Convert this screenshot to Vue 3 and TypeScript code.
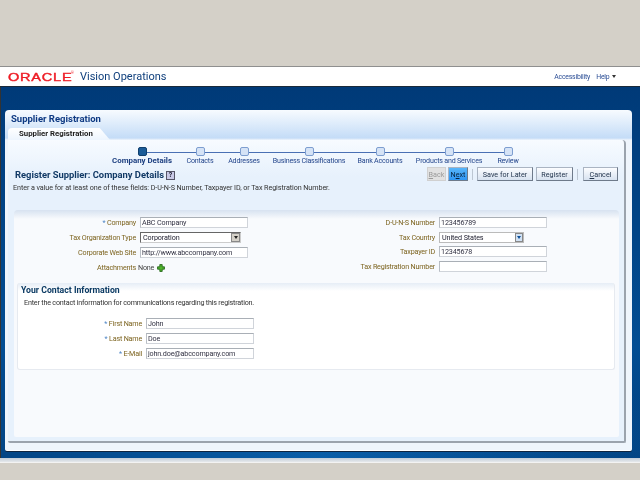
<script setup lang="ts">
const steps = [
  { label: 'Company Details', x: 142, active: true },
  { label: 'Contacts', x: 200, active: false },
  { label: 'Addresses', x: 244, active: false },
  { label: 'Business Classifications', x: 309, active: false },
  { label: 'Bank Accounts', x: 380, active: false },
  { label: 'Products and Services', x: 449, active: false },
  { label: 'Review', x: 508, active: false },
]
const contact = [
  { label: 'First Name', value: 'John' },
  { label: 'Last Name', value: 'Doe' },
  { label: 'E-Mail', value: 'john.doe@abccompany.com' },
]
</script>

<template>
  <div class="page">
    <div class="top-space"></div>
    <header class="brand">
      <div class="logo"><span class="oracle">ORACLE</span><span class="reg">®</span></div>
      <span class="app">Vision Operations</span>
      <nav class="links"><span>Accessibility</span><span>Help <i class="caret"></i></span></nav>
    </header>
    <main class="blue">
      <section class="outer">
        <h1 class="title">Supplier Registration</h1>
        <div class="tabs"><div class="tab">Supplier Registration</div></div>
        <div class="inner">
          <div class="train">
            <div class="line"></div>
            <div v-for="s in steps" :key="s.label" class="step" :style="{ left: s.x - 8 + 'px' }">
              <span class="node" :class="{ on: s.active }"></span>
              <span class="step-label" :class="{ on: s.active }">{{ s.label }}</span>
            </div>
          </div>
          <div class="heading-row">
            <div class="heading"><h2>Register Supplier: Company Details</h2><span class="help">?</span></div>
            <div class="actions">
              <button class="btn off"><u>B</u>ack</button>
              <button class="btn next">N<u>e</u>xt</button>
              <span class="sep"></span>
              <button class="btn save">Save for Later</button>
              <button class="btn reg-btn">Register</button>
              <span class="sep sep2"></span>
              <button class="btn cancel"><u>C</u>ancel</button>
            </div>
          </div>
          <p class="hint">Enter a value for at least one of these fields: D-U-N-S Number, Taxpayer ID, or Tax Registration Number.</p>
          <div class="form">
            <div class="cols">
              <div class="col left">
                <div class="row"><label><b>*</b> Company</label><span class="input w">ABC Company</span></div>
                <div class="row"><label>Tax Organization Type</label>
                  <span class="select dark">Corporation<i class="sel-btn grey"></i></span></div>
                <div class="row"><label>Corporate Web Site</label><span class="input w">http://www.abccompany.com</span></div>
                <div class="row"><label>Attachments</label><span class="none">None</span>
                  <svg class="plus" viewBox="0 0 10 10" width="8" height="8"><path d="M3.500 .7h3v2.800h2.800v3H6.500v2.800h-3V6.500H.7v-3h2.800z" fill="#4fb32c" stroke="#1c5c12" stroke-width="1"/></svg>
                </div>
              </div>
              <div class="col right">
                <div class="row r"><label>D-U-N-S Number</label><span class="input w">123456789</span></div>
                <div class="row r"><label>Tax Country</label>
                  <span class="select light">United States<i class="sel-btn blue-btn"></i></span></div>
                <div class="row r"><label>Taxpayer ID</label><span class="input w">12345678</span></div>
                <div class="row r"><label>Tax Registration Number</label><span class="input w"></span></div>
              </div>
            </div>
            <div class="contact">
              <h3>Your Contact Information</h3>
              <p>Enter the contact information for communications regarding this registration.</p>
              <div class="contact-rows">
                <div v-for="c in contact" :key="c.label" class="row c">
                  <label><b>*</b> {{ c.label }}</label><span class="input w">{{ c.value }}</span>
                </div>
              </div>
            </div>
          </div>
        </div>
      </section>
    </main>
    <div class="foot-bar"></div>
  </div>
</template>

<style>
html, body { margin: 0; background: #d4d0c8; }
</style>

<style scoped>
.page { width: 640px; height: 480px; overflow: hidden; background: #d4d0c8; font-family: Roboto, "Liberation Sans", Arial, sans-serif; font-size: 8px; color: #333; box-sizing: border-box; filter: blur(.25px); }
.top-space { height: 66px; }
.brand { height: 21px; box-sizing: border-box; display: flex; align-items: center; background: #fff; border-top: 1px solid #8f8f8f; border-bottom: 1px solid #1a2a3a; padding-left: 8px; padding-right: 24px; }
.logo { width: 72px; display: flex; align-items: flex-start; color: #ee1c25; flex: none; }
.oracle { width: 48px; font-family: "Liberation Sans", Arial, sans-serif; font-size: 11px; letter-spacing: .6px; display: inline-block; transform: scaleX(1.32); transform-origin: left center; -webkit-text-stroke: .4px #ee1c25; line-height: 12px; }
.reg { font-size: 3.500px; margin-left: 15px; line-height: 5px; }
.app { font-size: 11px; color: #0f3f7c; }
.links { margin-left: auto; display: flex; gap: 6px; color: #2d4f96; font-size: 6.900px; letter-spacing: -.2px; }
.caret { display: inline-block; border: 2px solid transparent; border-top: 3px solid #333; border-bottom: 0; vertical-align: 1px; margin-left: 1px; }
.blue { height: 371px; box-sizing: border-box; padding: 23px 8px 7px 4px; background: radial-gradient(ellipse 60% 30% at 50% 100%, #0a5ea8, transparent), linear-gradient(#003a78, #024d93 70%, #013f7d); border-left: 1px solid #333; }
.outer { height: 341px; box-sizing: border-box; display: flex; flex-direction: column; padding: 0 6px 7px 3px; border-radius: 4px 4px 2px 2px; background: linear-gradient(#f7fbff, #c4dcf7 28px, #eff5fc 30px, #eff5fc); border-bottom: 1px solid #fff; box-shadow: 0 1px 0 #10253f; }
.title { margin: 0; padding: 3px 3px 0; height: 15px; box-sizing: border-box; font-size: 9.500px; font-weight: 700; color: #0f3a83; line-height: 12px; white-space: nowrap; }
.tabs { height: 12px; margin-top: 3px; }
.tab { width: 102px; height: 12px; box-sizing: border-box; padding-left: 11px; font-size: 7.800px; line-height: 12px; font-weight: 700; color: #222; background: linear-gradient(#fff, #edf5fe); border-radius: 4px 0 0 0; clip-path: polygon(0 0, 90% 0, 100% 100%, 0 100%); white-space: nowrap; }
.inner { flex: 1; position: relative; box-sizing: border-box; padding: 0 5px 4px 6px; border-radius: 0 4px 2px 2px; background: linear-gradient(#f7fbff, #e7f1fc 36px); border-right: 2px solid #9ba3ad; border-bottom: 2px solid #9ba3ad; display: flex; flex-direction: column; min-height: 0; }
.train { height: 26px; position: relative; margin: 0 -6px; }
.line { position: absolute; left: 134px; width: 366px; top: 12px; height: 1px; background: #4a70b4; }
.step { position: absolute; top: 7px; width: 0; display: flex; flex-direction: column; align-items: center; }
.node { width: 9px; height: 9px; box-sizing: border-box; border-radius: 2px; border: 1px solid #7d9ed0; background: #d5e3f6; flex: none; }
.node.on { background: #1b5c98; border-color: #11406e; }
.step-label { font-size: 7.100px; line-height: 10px; margin-top: 0; white-space: nowrap; color: #24468c; letter-spacing: -.2px; }
.step-label.on { font-size: 7.900px; font-weight: 700; color: #1d3f80; letter-spacing: 0; }
.heading-row { display: flex; justify-content: space-between; align-items: flex-start; height: 17px; margin: 0 -1px; }
.heading { display: flex; align-items: center; gap: 2px; padding-left: 2px; height: 16px; margin-top: 1px; }
h2 { margin: 0; font-size: 9.400px; font-weight: 700; color: #123a66; line-height: 14px; white-space: nowrap; }
.help { width: 9px; height: 9px; box-sizing: border-box; border: 1px solid #556; background: #c9c9e6; font-size: 7px; line-height: 7px; text-align: center; font-weight: 700; color: #223; }
.actions { display: flex; align-items: center; margin-right: 2px; margin-top: 1px; }
.btn { font: 7.200px Roboto, "Liberation Sans", Arial, sans-serif; height: 14px; box-sizing: border-box; padding: 0; background: linear-gradient(#fcfdff, #d7e2f0); border: 1px solid #aab4c2; border-right-color: #6e7a8a; border-bottom-color: #6e7a8a; color: #24364e; }
.btn.off { width: 19px; color: #9a9a9a; background: #e1e1e1; border-color: #d0d0d0; }
.btn.next { width: 20px; margin-left: 2px; background: linear-gradient(#57b5fa, #2f96f4); color: #06223e; }
.btn.save { width: 56px; }
.btn.reg-btn { width: 37px; margin-left: 3px; }
.btn.cancel { width: 35px; }
.sep { width: 1px; height: 11px; background: #bcc6d2; margin: 0 4px; }
.sep2 { margin: 0 5px 0 4px; }
.hint { margin: 0 0 0 -1px; font-size: 7.200px; letter-spacing: -.08px; line-height: 10px; color: #333; height: 27px; white-space: nowrap; }
.form { flex: 1; box-sizing: border-box; padding: 5px 3px 0; border-radius: 4px 4px 2px 2px; background: linear-gradient(#d7e2f0, #f8fafd 9px); min-height: 0; }
.cols { display: flex; height: 68px; }
.col.left { width: 323px; flex: none; }
.row { display: flex; align-items: center; height: 15px; }
.row label { width: 119px; flex: none; text-align: right; color: #7d6420; font-size: 7.200px; letter-spacing: -.2px; margin-right: 4px; white-space: nowrap; }
.row.r { height: 14.700px; }
.row.r label { width: 95px; }
.row.c label { width: 121px; }
.row label b { color: #4f86c6; font-weight: 400; }
.input { height: 11px; box-sizing: border-box; border: 1px solid #d0d4da; border-top-color: #a9afb6; border-left-color: #b9bec5; background: #fff; padding: 0 1px; font-size: 7.200px; letter-spacing: -.16px; line-height: 9px; color: #334; white-space: nowrap; overflow: hidden; }
.input.w { width: 108px; }
.select { display: flex; align-items: center; height: 11px; box-sizing: border-box; font-size: 7.200px; letter-spacing: -.1px; background: #fff; padding-left: 2px; color: #223; position: relative; }
.select.dark { width: 101px; height: 11px; border: 1px solid #666; border-bottom-color: #ccc; border-right-color: #ccc; }
.select.light { width: 85px; border: 1px solid #bbb; }
.sel-btn { position: absolute; right: 0; top: 0; width: 9px; height: 9px; box-sizing: border-box; border: 1px solid #888; }
.sel-btn::after { content: ""; position: absolute; left: 1.500px; top: 2px; border: 2px solid transparent; border-top: 3px solid #222; border-bottom: 0; }
.sel-btn.grey { background: #d4d0c8; }
.sel-btn.blue-btn { width: 8px; background: #d2e2f4; }
.sel-btn.blue-btn::after { left: 1px; border-top-color: #0c4f98; }
.none { font-size: 7.200px; letter-spacing: -.2px; margin-left: -2px; color: #444; }
.plus { margin-left: 3px; }
.contact { margin: 0 1px 0 0; height: 87px; box-sizing: border-box; background: linear-gradient(#e6edf6, #fff 8px); border: 1px solid #e6eaf0; border-top: 0; border-radius: 3px; padding: 0 3px; }
h3 { margin: 0; font-size: 8.700px; line-height: 14px; color: #0b3a63; font-weight: 700; white-space: nowrap; }
.contact p { margin: 0 0 0 3px; font-size: 7.200px; letter-spacing: -.2px; line-height: 11px; white-space: nowrap; }
.contact-rows { margin-top: 8px; }
.foot-bar { height: 5px; box-sizing: border-box; background: linear-gradient(#c3cdd8, #e6e9ec); border-bottom: 1px solid #f3f3f3; }
</style>
